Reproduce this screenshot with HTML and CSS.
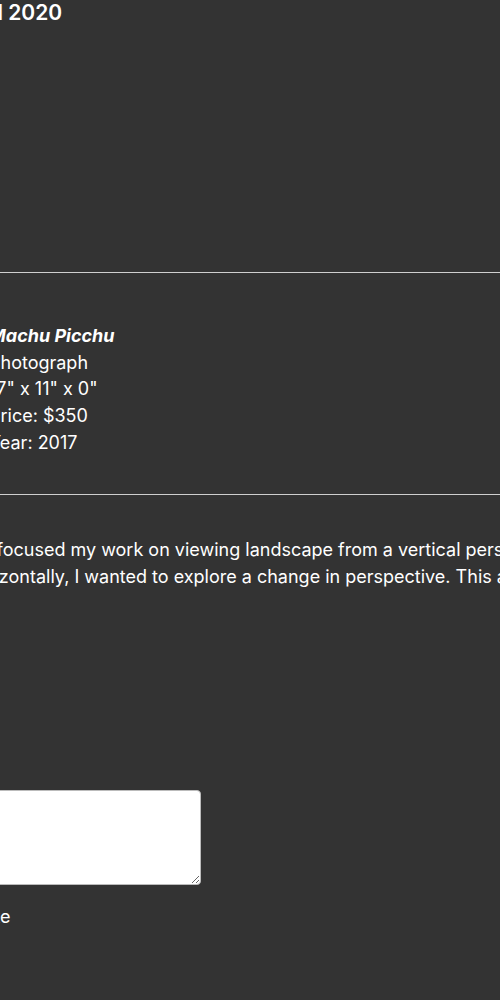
FILE: index.html
```html
<!DOCTYPE html>
<html lang="en">
<head>
<meta charset="UTF-8">
<title>Machu Picchu</title>
<link rel="stylesheet" href="styles.css">
</head>
<body>
<div class="page">
    <h1 class="show-title">Fall 2020</h1>
    <div class="artwork-space"></div>
    <hr class="divider">
    <div class="details">
        <p class="art-name">Machu Picchu</p>
        <p>Photograph</p>
        <p>17" x 11" x 0"</p>
        <p>Price: $350</p>
        <p>Year: 2017</p>
    </div>
    <hr class="divider">
    <p class="statement">I've focused my work on viewing landscape from a vertical perspective, rather than looking at it<br>horizontally, I wanted to explore a change in perspective. This allowed me to see the familiar in a new way.</p>
    <form class="comment-form">
        <textarea class="comment-box"></textarea>
        <p class="comment-link">Note</p>
    </form>
</div>
</body>
</html>
```

FILE: styles.css
```css
body, html {
    margin: 0;
    padding: 0;
    background-color: #333333;
    color: #ffffff;
    font-family: Inter, "Noto Sans", sans-serif;
    overflow: hidden;
}
.page {
    margin-left: -30px;
    width: 1400px;
}
.show-title {
    margin: 0 0 0 -2px;
    font-size: 21px;
    font-weight: 600;
    line-height: 25px;
}
.artwork-space {
    height: 247px;
}
.divider {
    margin: 0;
    border: none;
    border-top: 1px solid #cfcfcf;
}
.details {
    padding: 50px 0 37px 19px;
}
.details p {
    margin: 0;
    font-size: 18px;
    line-height: 26.7px;
}
.art-name {
    font-weight: 700;
    font-style: italic;
}
.statement {
    margin: 41px 0 0 -4px;
    text-indent: -5px;
    font-size: 18px;
    line-height: 27px;
}
.comment-form {
    margin-top: 200px;
}
.comment-box {
    display: block;
    width: 225px;
    height: 89px;
    border: 1px solid #bbbbbb;
    border-radius: 4px;
    background: #ffffff;
}
.comment-link {
    margin: 21px 0 0 0;
    font-size: 18px;
}
```
